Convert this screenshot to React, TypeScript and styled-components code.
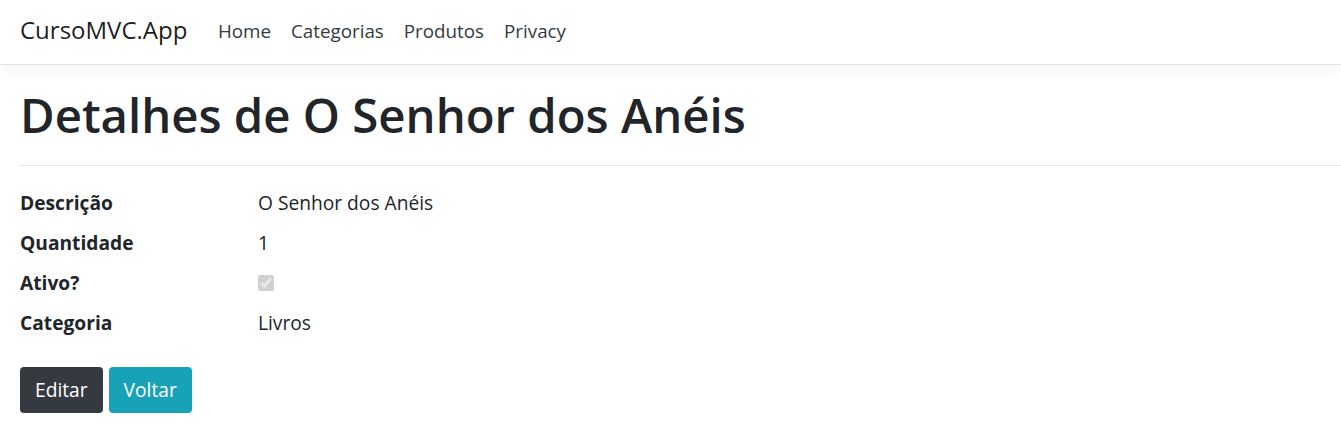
import React from "react";
import styled, { createGlobalStyle } from "styled-components";

const GlobalStyle = createGlobalStyle`
  html, body { margin: 0; padding: 0; background: #fff; }
  body {
    font-family: "Open Sans", "Noto Sans", sans-serif;
    font-size: 19.2px;
    line-height: 30px;
    color: #212529;
  }
  * { box-sizing: border-box; }
`;

const NavBar = styled.header`
  height: 65px;
  display: flex;
  align-items: center;
  padding: 0 20px 2px 20px;
  background: #fff;
  border-bottom: 1px solid #dee2e6;
  box-shadow: 0 5px 15px rgba(0, 0, 0, 0.05);
`;

const Brand = styled.a`
  font-size: 24px;
  line-height: 30px;
  color: rgba(0, 0, 0, 0.9);
  text-decoration: none;
  margin-right: 20.5px;
  padding-bottom: 2px;
`;

const NavList = styled.nav`
  display: flex;
`;

const NavLink = styled.a`
  padding: 0 10px;
  color: #343a40;
  text-decoration: none;
  font-size: 18.8px;
`;

const Main = styled.main`
  padding: 20px 0 0 20px;
`;

const Title = styled.h1`
  margin: 0;
  font-size: 47.3px;
  font-weight: 600;
  line-height: 60px;
  color: #212529;
`;

const Divider = styled.hr`
  margin: 20px 0 22px 0;
  border: 0;
  border-top: 1px solid rgba(0, 0, 0, 0.1);
`;

const DetailList = styled.dl`
  display: grid;
  grid-template-columns: 238px 1fr;
  row-gap: 10px;
  margin: 0 0 20px 0;
`;

const Term = styled.dt`
  font-weight: 700;
  line-height: 30px;
  margin: 0;
`;

const Value = styled.dd`
  margin: 0;
  line-height: 30px;
  display: flex;
  align-items: center;
`;

const Check = styled.input`
  width: 16px;
  height: 16px;
  margin: 0;
`;

const Actions = styled.div`
  display: flex;
  gap: 6px;
  padding-top: 9px;
`;

const Button = styled.a<{ $variant: "dark" | "info" }>`
  display: inline-flex;
  align-items: center;
  height: 46px;
  padding: 0 15px 1px 15px;
  border-radius: 4px;
  font-size: 19.2px;
  color: #fff;
  text-decoration: none;
  background: ${(p) => (p.$variant === "dark" ? "#343a40" : "#17a2b8")};
`;

export default function App() {
  return (
    <>
      <GlobalStyle />
      <NavBar>
        <Brand href="#">CursoMVC.App</Brand>
        <NavList>
          <NavLink href="#">Home</NavLink>
          <NavLink href="#">Categorias</NavLink>
          <NavLink href="#">Produtos</NavLink>
          <NavLink href="#">Privacy</NavLink>
        </NavList>
      </NavBar>
      <Main>
        <Title>Detalhes de O Senhor dos Anéis</Title>
        <Divider />
        <DetailList>
          <Term>Descrição</Term>
          <Value>O Senhor dos Anéis</Value>
          <Term>Quantidade</Term>
          <Value>1</Value>
          <Term>Ativo?</Term>
          <Value>
            <Check type="checkbox" checked disabled readOnly />
          </Value>
          <Term>Categoria</Term>
          <Value>Livros</Value>
        </DetailList>
        <Actions>
          <Button href="#" $variant="dark">Editar</Button>
          <Button href="#" $variant="info">Voltar</Button>
        </Actions>
      </Main>
    </>
  );
}
